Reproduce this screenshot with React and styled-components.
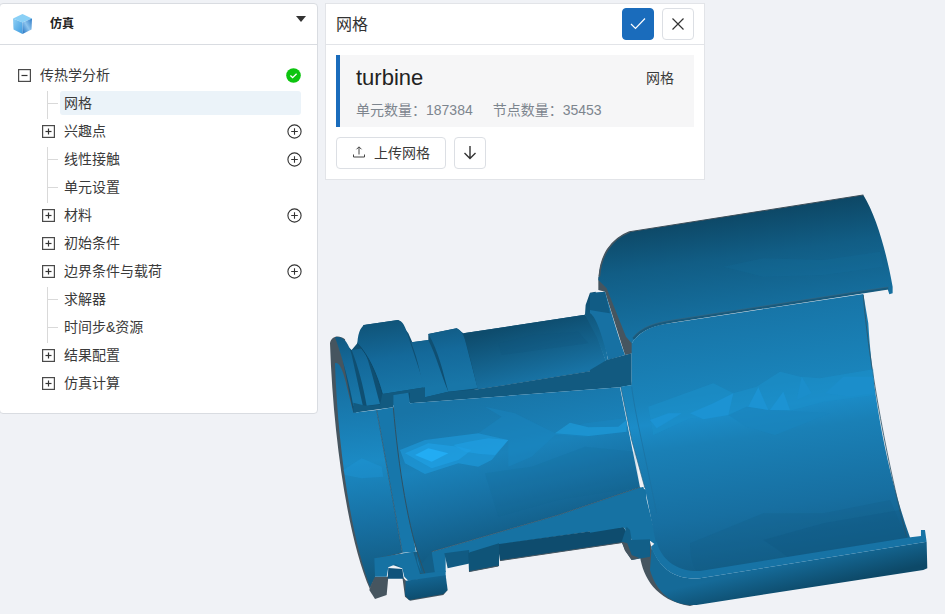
import React from "react";
import styled, { createGlobalStyle } from "styled-components";

const GlobalStyle = createGlobalStyle`
  html, body { margin: 0; padding: 0; }
  body {
    font-family: "Liberation Sans", "Noto Sans CJK SC", sans-serif;
    background: #f0f2f6;
  }
`;

const Page = styled.div`
  position: relative;
  width: 945px;
  height: 614px;
  overflow: hidden;
  background: #f0f2f6;
`;

const Canvas = styled.svg`
  position: absolute;
  left: 0;
  top: 0;
  width: 945px;
  height: 614px;
`;

const Panels = styled.div`
  position: relative;
  display: flex;
  align-items: flex-start;
  gap: 7px;
  padding-top: 3px;
  margin-left: -1px;
`;

const TreePanel = styled.section`
  width: 319px;
  height: 411px;
  box-sizing: border-box;
  background: #fff;
  border: 1px solid #d9dce1;
  border-radius: 4px;
`;

const TreeHeader = styled.header`
  height: 40px;
  display: flex;
  align-items: center;
  padding: 0 11px 0 12px;
  border-bottom: 1px solid #d9dce1;
`;

const HeaderTitle = styled.span`
  margin: 0 0 3px 17px;
  font-size: 12px;
  font-weight: 700;
  color: #222;
`;

const Caret = styled.span`
  margin-left: auto;
  margin-bottom: 10px;
  border-left: 5px solid transparent;
  border-right: 5px solid transparent;
  border-top: 6px solid #333;
`;

const Tree = styled.div`
  padding: 16px 16px 16px 0;
`;

const Row = styled.div`
  height: 28px;
  display: flex;
  align-items: center;
  padding-left: ${(p) => (p.$top ? 18 : 42)}px;
  color: #3a3a3a;
  font-size: 14px;
`;

const Toggle = styled.svg`
  width: 13px;
  height: 13px;
  flex: none;
  margin-right: 9px;
`;

const Connector = styled.span`
  flex: none;
  align-self: flex-start;
  width: 17px;
  height: 28px;
  margin: 2px 0 0 5px;
  background:
    linear-gradient(#d9d9d9, #d9d9d9) no-repeat 0 0 / 1px 100%,
    linear-gradient(#d9d9d9, #d9d9d9) no-repeat 0 12px / 11px 1px;
`;

const Label = styled.span`
  flex: 1;
  height: 24px;
  line-height: 24px;
  margin-left: ${(p) => (p.$selected ? -4 : 0)}px;
  padding-left: ${(p) => (p.$selected ? 4 : 0)}px;
  border-radius: 3px;
  background: ${(p) => (p.$selected ? "#ebf3f9" : "transparent")};
`;

const StatusIcon = styled.svg`
  width: 15px;
  height: 15px;
  flex: none;
  margin-right: ${(p) => (p.$ok ? 0 : -1)}px;
`;

const MeshPanel = styled.section`
  width: 380px;
  height: 177px;
  box-sizing: border-box;
  background: #fff;
  border: 1px solid #e2e4e8;
`;

const MeshHeader = styled.header`
  height: 40px;
  display: flex;
  align-items: center;
  gap: 8px;
  padding: 0 10px;
  border-bottom: 1px solid #e2e4e8;
`;

const MeshTitle = styled.span`
  flex: 1;
  font-size: 16px;
  color: #333;
  margin-bottom: 2px;
`;

const IconButton = styled.button`
  width: 32px;
  height: 32px;
  padding: 0;
  display: flex;
  align-items: center;
  justify-content: center;
  box-sizing: border-box;
  border-radius: 4px;
  border: 1px solid ${(p) => (p.$primary ? "#1a6cbc" : "#dcdfe4")};
  background: ${(p) => (p.$primary ? "#1a6cbc" : "#fff")};
`;

const MeshBody = styled.div`
  padding: 10px 10px 0;
`;

const MeshCard = styled.div`
  height: 72px;
  box-sizing: border-box;
  padding: 9px 20px 0 16px;
  border-left: 4px solid #1a6cbc;
  background: #f6f6f7;
`;

const CardTop = styled.div`
  display: flex;
  align-items: center;
  justify-content: space-between;
  height: 28px;
`;

const MeshName = styled.span`
  font-size: 22px;
  color: #222;
`;

const MeshType = styled.span`
  font-size: 14px;
  color: #3a3a3a;
  margin-bottom: 2px;
`;

const Stats = styled.div`
  display: flex;
  gap: 20px;
  margin-top: 9px;
  font-size: 14px;
  line-height: 18px;
  color: #7d858e;
`;

const Actions = styled.div`
  display: flex;
  gap: 8px;
  margin-top: 10px;
`;

const UploadButton = styled.button`
  width: 110px;
  height: 32px;
  display: flex;
  align-items: center;
  justify-content: center;
  gap: 8px;
  padding: 0 0 2px;
  box-sizing: border-box;
  background: #fff;
  border: 1px solid #dcdfe4;
  border-radius: 4px;
  font-family: inherit;
  font-size: 14px;
  color: #3a3a3a;
`;

const treeItems = [
  { name: "网格", leaf: true, selected: true },
  { name: "兴趣点", add: true },
  { name: "线性接触", leaf: true, add: true },
  { name: "单元设置", leaf: true },
  { name: "材料", add: true },
  { name: "初始条件" },
  { name: "边界条件与载荷", add: true },
  { name: "求解器", leaf: true },
  { name: "时间步&资源", leaf: true },
  { name: "结果配置" },
  { name: "仿真计算" },
];

function ToggleBox({ open }) {
  return (
    <Toggle viewBox="0 0 13 13" fill="none">
      <rect x="0.6" y="0.6" width="11.8" height="11.8" stroke="#4a4a4a" strokeWidth="1.2" />
      <path d="M3.5 6.5h6" stroke="#333" strokeWidth="1.2" />
      {!open && <path d="M6.5 3.5v6" stroke="#333" strokeWidth="1.2" />}
    </Toggle>
  );
}

function AddIcon() {
  return (
    <StatusIcon viewBox="0 0 15 15" fill="none">
      <circle cx="7.5" cy="7.5" r="6.6" stroke="#333" strokeWidth="1.1" />
      <path d="M4.2 7.5h6.6M7.5 4.2v6.6" stroke="#333" strokeWidth="1.1" />
    </StatusIcon>
  );
}

function OkIcon() {
  return (
    <StatusIcon $ok viewBox="0 0 15 15">
      <circle cx="7.5" cy="7.5" r="7.3" fill="#0cc40f" />
      <path d="M4.4 7.6l2.2 2 4-3.8" fill="none" stroke="#fff" strokeWidth="1.3" />
    </StatusIcon>
  );
}

function CubeLogo() {
  return (
    <svg width="21" height="22" viewBox="0 0 21 22">
      <defs>
        <linearGradient id="cubeLeft" x1="0" y1="0" x2="1" y2="1">
          <stop offset="0" stopColor="#8fd0f5" />
          <stop offset="1" stopColor="#3d9be0" />
        </linearGradient>
        <linearGradient id="cubeRight" x1="1" y1="0" x2="0" y2="1">
          <stop offset="0" stopColor="#2c78c4" />
          <stop offset="0.5" stopColor="#8cc4ee" />
          <stop offset="1" stopColor="#1f6fc0" />
        </linearGradient>
      </defs>
      <path d="M10.5 1 L20 5.5 L10.5 9.5 L1 5.5Z" fill="#8ad0f6" />
      <path d="M1 5.5 L10.5 9.5 V21 L1.5 16.5Z" fill="url(#cubeLeft)" />
      <path d="M20 5.5 L10.5 9.5 V21 L19.5 16.5Z" fill="url(#cubeRight)" />
    </svg>
  );
}

// the turbine housing, drawn in the coordinates of two 3x crops
function Housing() {
  return (
    <Canvas viewBox="0 0 945 614">
      <defs>
        <linearGradient id="outerTop" gradientUnits="userSpaceOnUse" x1="450" y1="95" x2="495" y2="425">
          <stop offset="0" stopColor="#0d4765" />
          <stop offset="0.4" stopColor="#115d85" />
          <stop offset="1" stopColor="#1672a3" />
        </linearGradient>
        <linearGradient id="innerBig" gradientUnits="userSpaceOnUse" x1="470" y1="380" x2="590" y2="1180">
          <stop offset="0" stopColor="#1774a6" />
          <stop offset="0.3" stopColor="#1a84bb" />
          <stop offset="0.38" stopColor="#1b8cc8" />
          <stop offset="0.48" stopColor="#1a80b6" />
          <stop offset="0.75" stopColor="#176fa1" />
          <stop offset="1" stopColor="#125a82" />
        </linearGradient>
        <linearGradient id="lowerWall" gradientUnits="userSpaceOnUse" x1="600" y1="1150" x2="620" y2="1240">
          <stop offset="0" stopColor="#156a98" />
          <stop offset="1" stopColor="#0d4968" />
        </linearGradient>
        <linearGradient id="tubeInner" gradientUnits="userSpaceOnUse" x1="500" y1="280" x2="600" y2="720">
          <stop offset="0" stopColor="#1874a6" />
          <stop offset="0.4" stopColor="#1a82ba" />
          <stop offset="0.7" stopColor="#176fa1" />
          <stop offset="1" stopColor="#125b83" />
        </linearGradient>
        <linearGradient id="flangeInner" gradientUnits="userSpaceOnUse" x1="60" y1="200" x2="130" y2="840">
          <stop offset="0" stopColor="#166b9b" />
          <stop offset="0.45" stopColor="#1b8ac4" />
          <stop offset="0.75" stopColor="#176fa1" />
          <stop offset="1" stopColor="#125a80" />
        </linearGradient>
        <linearGradient id="tubeOuter" gradientUnits="userSpaceOnUse" x1="600" y1="70" x2="640" y2="240">
          <stop offset="0" stopColor="#0e4c6d" />
          <stop offset="1" stopColor="#1873a5" />
        </linearGradient>
        <linearGradient id="ringOuter" gradientUnits="userSpaceOnUse" x1="170" y1="70" x2="200" y2="280">
          <stop offset="0" stopColor="#10557a" />
          <stop offset="0.5" stopColor="#14699a" />
          <stop offset="1" stopColor="#1876a8" />
        </linearGradient>
        <linearGradient id="ringBack" gradientUnits="userSpaceOnUse" x1="820" y1="-20" x2="850" y2="190">
          <stop offset="0" stopColor="#0e4c6d" />
          <stop offset="1" stopColor="#1876a8" />
        </linearGradient>
        <linearGradient id="footOuter" gradientUnits="userSpaceOnUse" x1="300" y1="830" x2="310" y2="900">
          <stop offset="0" stopColor="#136592" />
          <stop offset="1" stopColor="#0d4a6a" />
        </linearGradient>
      </defs>

      {/* neck and flange */}
      <g transform="translate(325 300) scale(0.3333)">
        <path d="M15,130 C18,110 40,102 60,118 L88,320 L230,760 L150,780 L150,830 L135,868 C70,720 25,420 15,130Z" fill="#46555f" />
        <path d="M148,830 L133,870 L150,897 L185,885 L190,830Z" fill="#46555f" />
        <path d="M232,830 L240,890 L255,902 L355,885 L368,870 L250,850Z" fill="#46555f" />

        <path d="M40,112 L80,150 L97,130 L115,75 L220,60 L250,100 L262,127 L310,120 L310,102 L395,85 L415,100 L780,44 L850,205 L458,268 L85,338Z" fill="#0f4f72" />
        <path d="M30,112 C55,106 72,130 80,165 L113,315 L85,318 C75,260 55,180 30,112Z" fill="url(#ringOuter)" />
        <path d="M80,150 L115,145 C135,190 150,260 165,312 L125,317 C115,260 100,200 80,150Z" fill="url(#ringOuter)" />
        <path d="M97,130 C100,90 110,78 122,74 L218,60 C232,62 240,78 246,98 L300,262 L172,282 C155,220 130,165 97,130Z" fill="url(#ringOuter)" />
        <path d="M97,130 C130,165 155,220 172,282" stroke="#0d4868" strokeWidth="3" fill="none" />
        <path d="M258,127 L310,120 C335,170 350,230 370,275 L300,292 C290,240 280,180 258,127Z" fill="url(#ringOuter)" />
        <path d="M310,102 L395,85 C408,90 415,105 420,120 L458,265 L370,275 C355,220 340,150 310,102Z" fill="url(#ringOuter)" />
        <path d="M415,100 L780,44 C800,60 810,85 818,110 L850,205 L458,268 C445,210 430,150 415,100Z" fill="url(#tubeOuter)" />
        <path d="M520,130 L620,105 L760,95 L790,130 L640,150 L530,165Z" fill="#0f527a" opacity="0.25" />
        <path d="M780,44 L782,15 L795,-22 L812,-25 L850,185 L850,205 L815,110Z" fill="url(#ringBack)" />

        <path d="M85,338 L85,308 L125,318 L165,314 L172,282 L300,262 L300,292 L370,275 L458,268 L850,205 L850,185 L905,165 L920,255 L885,262 L255,310 L255,278 L205,285 L205,322Z" fill="#125a80" />

        <path d="M145,775 L272,755 L320,750 L362,815 L290,825Z" fill="#135f88" />
        <path d="M30,190 C45,180 60,230 68,270 L85,338 L155,330 L232,758 L150,775 L150,830 L135,860 C75,700 38,430 30,190Z" fill="url(#flangeInner)" />
        <path d="M155,330 L205,322 L278,790 L290,820 L272,755 L232,758Z" fill="#1777ab" />
        <path d="M155,330 L232,758" stroke="#2f5a73" strokeWidth="2.5" fill="none" />
        <path d="M205,285 L250,278 L255,310 L885,262 L945,562 L700,645 L320,755 L290,792 C250,700 220,500 205,322Z" fill="url(#tubeInner)" />
        <path d="M205,322 C220,500 250,690 292,800 L300,822 L280,822 L265,757" stroke="#2f5163" strokeWidth="3" fill="none" />
        <path d="M55,510 L110,475 L170,500 L175,530 L110,535 L60,525Z" fill="#1d97d8" opacity="0.4" />
        <path d="M480,320 L570,340 L690,400 L780,370 L900,355 L905,395 L780,410 L690,405 L620,470 L550,500 L550,420 L460,400 L530,350Z" fill="#1a8ac6" opacity="0.35" />
        <path d="M690,400 L735,368 L790,382 L880,380 L905,360 L905,395 L790,408Z" fill="#1e9ad9" opacity="0.7" />
        <path d="M225,450 L300,420 L460,400 L550,420 L500,480 L460,500 L400,490 L300,522 L240,490Z" fill="#1f9fe2" opacity="0.55" />
        <path d="M240,460 L310,430 L400,440 L440,450 L400,480 L320,505Z" fill="#1fa2e6" opacity="0.6" />
        <path d="M270,465 L310,445 L370,460 L320,485Z" fill="#22acf3" />
        <path d="M385,435 L430,425 L490,415 L550,420 L510,465 L465,462 L420,455Z" fill="#1fa0e4" opacity="0.6" />
        <path d="M480,520 L620,500 L780,440 L930,455 L945,560 L700,600 L520,650Z" fill="#125f8a" opacity="0.12" />

        <path d="M320,755 L700,645 L945,562 L965,570 L960,690 L918,712 L895,680 L520,735 L440,765 L430,755 L362,765 L362,815 L330,820Z" fill="#1672a3" />
        <path d="M320,755 L700,645 L945,562" stroke="#34576b" strokeWidth="2.5" fill="none" />
        <path d="M518,733 L895,680 L915,712 L920,755 L890,728 L525,782Z" fill="#0e4c6e" />
        <path d="M525,782 L890,728" stroke="#46555f" strokeWidth="3" fill="none" />
        <path d="M358,760 L432,750 L437,790 L368,805Z" fill="#115b83" />
        <path d="M430,758 L522,730 L522,798 L432,815Z" fill="#0f5478" />
        <path d="M520,798 L432,815" stroke="#46555f" strokeWidth="3" fill="none" />
        <path d="M148,775 L265,755 L285,822 L362,812 L362,830 L250,842 L238,830 L232,805 L212,793 L190,802 L185,830 L150,830Z" fill="#1672a3" />
        <path d="M242,842 L362,826 L368,870 L355,882 L252,900 L240,885Z" fill="url(#footOuter)" />
        <path d="M190,804 L232,807 L236,836 L188,836Z" fill="#0f527a" />
      </g>

      {/* large housing, cut open */}
      <g transform="translate(590 180) scale(0.3333)">
        <path d="M25,290 L25,330 L45,335 L105,525 L128,520 L125,470 L60,320Z" fill="#46555f" />
        <path d="M0,340 L45,335 C65,400 85,470 105,525 L55,540 C40,480 20,410 0,400Z" fill="#1771a3" />
        <path d="M0,340 L45,335 L60,400 L30,395 L0,390Z" fill="#115c85" />
        <path d="M0,570 L50,540 L105,525 L125,520 L125,615 L0,605Z" fill="#125a80" />

        <path d="M25,300 C30,230 60,175 120,155 L820,45 C860,110 890,220 908,320 L908,340 L898,343 L893,327 L820,338 L250,425 C190,435 150,450 125,490 L108,470 L50,325Z" fill="url(#outerTop)" />
        <path d="M120,155 L820,45" stroke="#3c4d58" strokeWidth="3" fill="none" />
        <path d="M28,290 C32,230 60,178 120,155" stroke="#465660" strokeWidth="5" fill="none" />
        <path d="M400,260 L520,235 L700,240 L870,215 L880,260 L700,285 L520,290Z" fill="#1a7cb0" opacity="0.12" />

        <path d="M0,975 L160,920 L205,1100 L180,1082 L125,1080 L110,1040 L0,1058Z" fill="#1672a3" />

        <path d="M125,490 C150,450 190,435 250,428 L820,342 L835,430 C845,600 880,850 962,1078 L330,1180 C280,1185 225,1160 200,1100 L165,925 L125,780 L92,620 L125,615Z" fill="url(#innerBig)" />
        <path d="M130,476 C155,445 195,432 250,424 L895,325" stroke="#175a7d" strokeWidth="7" fill="none" />
        <path d="M130,472 C155,441 195,428 250,420 L895,321" stroke="#44606f" strokeWidth="1.5" fill="none" />
        <path d="M820,345 C830,480 870,760 950,1072" stroke="#2f5468" strokeWidth="2.5" fill="none" />
        <path d="M92,620 L125,780 L165,925" stroke="#215f81" strokeWidth="2" fill="none" />
        <path d="M125,620 C135,700 160,800 200,1000" stroke="#1b6f9f" strokeWidth="2" fill="none" />

        <path d="M175,680 L370,610 L430,640 L500,620 L570,575 L630,590 L690,595 L850,568 L852,645 L700,665 L600,692 L540,690 L470,680 L420,705 L300,715 L190,765Z" fill="#1c8fcb" opacity="0.55" />
        <path d="M415,705 L470,740 L555,765 L720,700 L600,692 L540,690 L470,680Z" fill="#1a85bd" opacity="0.7" />
        <path d="M300,700 L370,670 L430,640 L415,705 L340,718Z" fill="#1c93d3" />
        <path d="M475,680 L505,622 L535,690Z" fill="#1c93d3" />
        <path d="M540,690 L580,635 L600,690Z" fill="#1c93d3" />
        <path d="M620,660 L635,590 L665,640Z" fill="#1b8ecb" />
        <path d="M705,640 L760,590 L850,590 L852,640 L780,650Z" fill="#1b8ecb" />
        <path d="M180,720 L235,700 L275,700 L200,745Z" fill="#1c93d3" />
        <path d="M300,1090 L520,1000 L700,1000 L900,960 L950,1075 L330,1178 C310,1175 300,1130 300,1090Z" fill="#125a82" opacity="0.22" />
        <path d="M520,1080 L700,1030 L930,990 L955,1078 L600,1135Z" fill="#0f527a" opacity="0.22" />

        <path d="M180,1085 L150,1130 C160,1190 195,1260 300,1278 L330,1270 L200,1170Z" fill="#46555f" />
        <path d="M185,1100 C210,1170 260,1200 330,1195 L1010,1085 L1012,1165 L1000,1170 L320,1275 C250,1280 200,1240 180,1170Z" fill="url(#lowerWall)" />
        <path d="M200,1085 C218,1150 275,1176 330,1173 L962,1072 L993,1068 L993,1050 L1005,1050 L1010,1085 L330,1195 C260,1200 210,1170 183,1100Z" fill="#1773a5" />
        <path d="M125,1080 L180,1078 L180,1130 L155,1135 L125,1140 L105,1110 L95,1085 L110,1040 L120,1050Z" fill="#125f88" />
        <path d="M95,1085 L105,1112 L125,1140 L150,1135 L125,1125 L112,1090Z" fill="#46555f" />
      </g>
    </Canvas>
  );
}

export default function App() {
  return (
    <Page>
      <GlobalStyle />
      <Housing />
      <Panels>
        <TreePanel>
          <TreeHeader>
            <CubeLogo />
            <HeaderTitle>仿真</HeaderTitle>
            <Caret />
          </TreeHeader>
          <Tree>
            <Row $top>
              <ToggleBox open />
              <Label>传热学分析</Label>
              <OkIcon />
            </Row>
            {treeItems.map((item) => (
              <Row key={item.name}>
                {item.leaf ? <Connector /> : <ToggleBox />}
                <Label $selected={item.selected}>{item.name}</Label>
                {item.add && <AddIcon />}
              </Row>
            ))}
          </Tree>
        </TreePanel>

        <MeshPanel>
          <MeshHeader>
            <MeshTitle>网格</MeshTitle>
            <IconButton $primary>
              <svg width="16" height="16" viewBox="0 0 16 16" fill="none">
                <path d="M1 8 L5.5 12.5 L15 2.5" stroke="#fff" strokeWidth="1.2" />
              </svg>
            </IconButton>
            <IconButton>
              <svg width="14" height="14" viewBox="0 0 14 14" fill="none">
                <path d="M1.5 1.5 L12.5 12.5 M12.5 1.5 L1.5 12.5" stroke="#333" strokeWidth="1.2" />
              </svg>
            </IconButton>
          </MeshHeader>
          <MeshBody>
            <MeshCard>
              <CardTop>
                <MeshName>turbine</MeshName>
                <MeshType>网格</MeshType>
              </CardTop>
              <Stats>
                <span>单元数量：187384</span>
                <span>节点数量：35453</span>
              </Stats>
            </MeshCard>
            <Actions>
              <UploadButton>
                <svg width="14" height="14" viewBox="0 0 14 14" fill="none">
                  <path d="M1.5 9.5 V12 H12.5 V9.5 M7 9.5 V2 M4.5 4.3 L7 1.8 L9.5 4.3" stroke="#444" strokeWidth="1" />
                </svg>
                上传网格
              </UploadButton>
              <IconButton>
                <svg width="16" height="16" viewBox="0 0 16 16" fill="none">
                  <path d="M8 1 V13.5 M2.5 8 L8 13.5 L13.5 8" stroke="#333" strokeWidth="1.4" />
                </svg>
              </IconButton>
            </Actions>
          </MeshBody>
        </MeshPanel>
      </Panels>
    </Page>
  );
}
